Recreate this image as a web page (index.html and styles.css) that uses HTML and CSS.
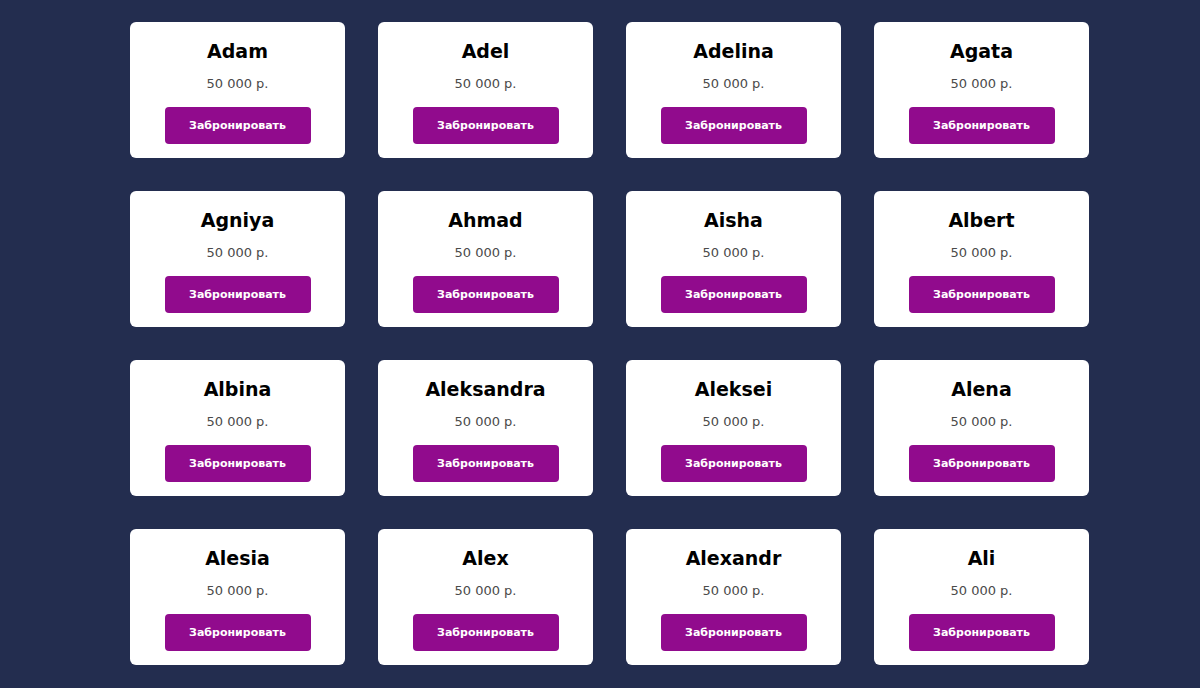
FILE: index.html
```html
<!DOCTYPE html>
<html lang="ru">
<head>
    <meta charset="UTF-8">
    <meta name="viewport" content="width=device-width, initial-scale=1.0">
    <title>Бронирование</title>
    <link rel="stylesheet" href="styles.css">
</head>
<body>
    <div class="container">
        <div class="cards">
            <div class="card">
                <h2 class="card-name">Adam</h2>
                <p class="card-price">50 000 р.</p>
                <button class="btn">Забронировать</button>
            </div>
            <div class="card">
                <h2 class="card-name">Adel</h2>
                <p class="card-price">50 000 р.</p>
                <button class="btn">Забронировать</button>
            </div>
            <div class="card">
                <h2 class="card-name">Adelina</h2>
                <p class="card-price">50 000 р.</p>
                <button class="btn">Забронировать</button>
            </div>
            <div class="card">
                <h2 class="card-name">Agata</h2>
                <p class="card-price">50 000 р.</p>
                <button class="btn">Забронировать</button>
            </div>
            <div class="card">
                <h2 class="card-name">Agniya</h2>
                <p class="card-price">50 000 р.</p>
                <button class="btn">Забронировать</button>
            </div>
            <div class="card">
                <h2 class="card-name">Ahmad</h2>
                <p class="card-price">50 000 р.</p>
                <button class="btn">Забронировать</button>
            </div>
            <div class="card">
                <h2 class="card-name">Aisha</h2>
                <p class="card-price">50 000 р.</p>
                <button class="btn">Забронировать</button>
            </div>
            <div class="card">
                <h2 class="card-name">Albert</h2>
                <p class="card-price">50 000 р.</p>
                <button class="btn">Забронировать</button>
            </div>
            <div class="card">
                <h2 class="card-name">Albina</h2>
                <p class="card-price">50 000 р.</p>
                <button class="btn">Забронировать</button>
            </div>
            <div class="card">
                <h2 class="card-name">Aleksandra</h2>
                <p class="card-price">50 000 р.</p>
                <button class="btn">Забронировать</button>
            </div>
            <div class="card">
                <h2 class="card-name">Aleksei</h2>
                <p class="card-price">50 000 р.</p>
                <button class="btn">Забронировать</button>
            </div>
            <div class="card">
                <h2 class="card-name">Alena</h2>
                <p class="card-price">50 000 р.</p>
                <button class="btn">Забронировать</button>
            </div>
            <div class="card">
                <h2 class="card-name">Alesia</h2>
                <p class="card-price">50 000 р.</p>
                <button class="btn">Забронировать</button>
            </div>
            <div class="card">
                <h2 class="card-name">Alex</h2>
                <p class="card-price">50 000 р.</p>
                <button class="btn">Забронировать</button>
            </div>
            <div class="card">
                <h2 class="card-name">Alexandr</h2>
                <p class="card-price">50 000 р.</p>
                <button class="btn">Забронировать</button>
            </div>
            <div class="card">
                <h2 class="card-name">Ali</h2>
                <p class="card-price">50 000 р.</p>
                <button class="btn">Забронировать</button>
            </div>
        </div>
    </div>
</body>
</html>
```

FILE: styles.css
```css
body {
    margin: 0;
    font-family: 'DejaVu Sans', 'Liberation Sans', sans-serif;
    background-color: #232d4f;
}

.container {
    width: 980px;
    margin: 0 auto;
    padding: 22px 0 22px 20px;
    box-sizing: border-box;
}

.cards {
    display: grid;
    grid-template-columns: repeat(4, 215px);
    gap: 33px;
}

.card {
    background-color: #fff;
    border-radius: 6px;
    padding: 17px 10px 14px;
    display: flex;
    flex-direction: column;
    align-items: center;
    height: 136px;
    box-sizing: border-box;
}

.card-name {
    margin: 0;
    font-size: 19px;
    line-height: 24px;
    font-weight: 700;
    color: #000;
}

.card-price {
    margin: 11px 0 0;
    font-size: 13px;
    line-height: 20px;
    color: #4a4a4a;
}

.btn {
    margin-top: 13px;
    width: 146px;
    height: 37px;
    border: none;
    border-radius: 4px;
    background-color: #910b8d;
    color: #fff;
    font-family: inherit;
    font-size: 11px;
    font-weight: 700;
    cursor: pointer;
}
```
